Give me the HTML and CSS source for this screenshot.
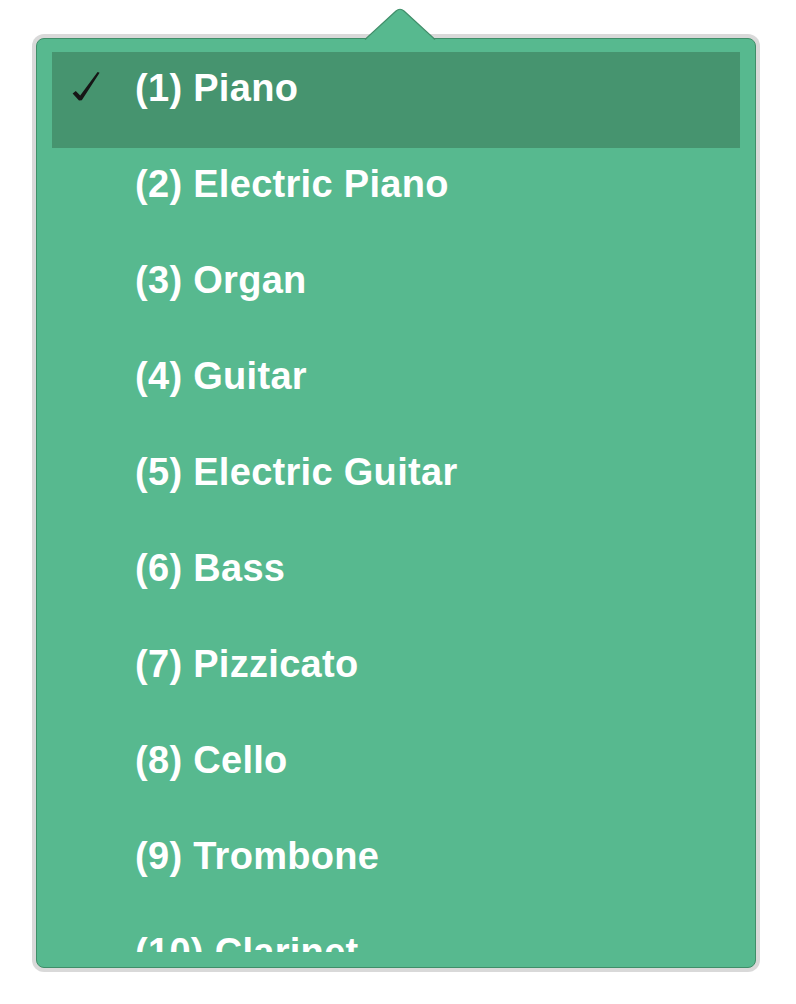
FILE: index.html
```html
<!DOCTYPE html>
<html>
<head>
<meta charset="utf-8">
<link rel="stylesheet" href="styles.css">
</head>
<body>
<div class="stage">
  <div class="dropdown">
    <svg class="arrow" width="74" height="33" viewBox="0 0 74 33">
      <path class="arrow-fill" d="M2 32 L33 3 Q37 -0.5 41 3 L72 32 Z"/>
      <path class="arrow-edge" d="M2 31.5 L33 3 Q37 -0.5 41 3 L72 31.5"/>
    </svg>
    <ul class="menu">
      <li class="item selected">
        <span class="check">
          <svg width="30" height="32" viewBox="0 0 30 32"><path d="M0.6 22.5 L3.8 20 L8.2 24.6 L25.6 1 L27.6 1.8 L9.8 29.2 L7 29.4 Z"/></svg>
        </span>
        <span class="label">(1) Piano</span>
      </li>
      <li class="item"><span class="check"></span><span class="label">(2) Electric Piano</span></li>
      <li class="item"><span class="check"></span><span class="label">(3) Organ</span></li>
      <li class="item"><span class="check"></span><span class="label">(4) Guitar</span></li>
      <li class="item"><span class="check"></span><span class="label">(5) Electric Guitar</span></li>
      <li class="item"><span class="check"></span><span class="label">(6) Bass</span></li>
      <li class="item"><span class="check"></span><span class="label">(7) Pizzicato</span></li>
      <li class="item"><span class="check"></span><span class="label">(8) Cello</span></li>
      <li class="item"><span class="check"></span><span class="label">(9) Trombone</span></li>
      <li class="item"><span class="check"></span><span class="label">(10) Clarinet</span></li>
    </ul>
  </div>
</div>
</body>
</html>
```

FILE: styles.css
```css
html, body {
  margin: 0;
  padding: 0;
  background: #ffffff;
}

.stage {
  padding: 38px 0 0 36px;
  width: 796px;
  height: 1004px;
  box-sizing: border-box;
}

.dropdown {
  position: relative;
  width: 720px;
  box-sizing: border-box;
  background: #57b98f;
  border: 1px solid #3f8e69;
  border-radius: 8px;
  box-shadow: 0 0 0 4px rgba(0, 0, 0, 0.15);
  padding: 13px 15px 15px 15px;
}

.arrow {
  position: absolute;
  left: 326px;
  top: -31px;
  display: block;
}

.arrow-fill {
  fill: #57b98f;
}

.arrow-edge {
  fill: none;
  stroke: #3f8e69;
  stroke-width: 1.2;
}

.menu {
  list-style: none;
  margin: 0;
  padding: 0;
  height: 900px;
  overflow: hidden;
}

.item {
  display: flex;
  align-items: flex-start;
  height: 96px;
  box-sizing: border-box;
  padding: 12px 0 36px 20px;
  font-family: "Liberation Sans", Arial, Helvetica, sans-serif;
  font-weight: bold;
  font-size: 38px;
  line-height: 48px;
  letter-spacing: 0.3px;
  color: #ffffff;
}

.item.selected {
  background: #46946f;
}

.check {
  width: 63px;
  flex: 0 0 63px;
  height: 48px;
  display: flex;
  align-items: flex-start;
  padding-top: 7px;
  box-sizing: border-box;
}

.check svg {
  display: block;
}

.check path {
  fill: #161616;
}

.label {
  white-space: nowrap;
}
```
